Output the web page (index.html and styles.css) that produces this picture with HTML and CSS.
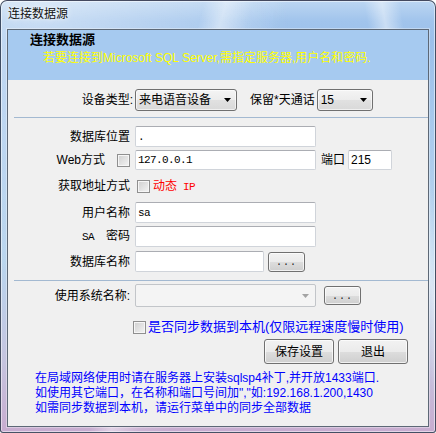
FILE: index.html
```html
<!DOCTYPE html>
<html lang="zh-CN">
<head>
<meta charset="utf-8">
<title>连接数据源</title>
<link rel="stylesheet" href="styles.css">
</head>
<body>
<div class="window">
  <div class="titlebar">连接数据源</div>
  <div class="client">
    <div class="header">
      <div class="header-title">连接数据源</div>
      <div class="header-sub">若要连接到Microsoft SQL Server,需指定服务器,用户名和密码.</div>
    </div>
    <div class="body">
      <div class="row row-device">
        <span class="label label-device">设备类型:</span>
        <div class="combo combo-device"><span>来电语音设备</span><svg class="arrow" width="7" height="4" viewBox="0 0 7 4"><path d="M0 0H7L3.5 4Z"/></svg></div>
        <span class="label-days">保留*天通话</span>
        <div class="combo combo-days"><span>15</span><svg class="arrow" width="7" height="4" viewBox="0 0 7 4"><path d="M0 0H7L3.5 4Z"/></svg></div>
      </div>
      <div class="sep sep1"></div>
      <div class="row row-dbloc">
        <span class="label">数据库位置</span>
        <div class="input input-wide"><span class="mono">.</span></div>
      </div>
      <div class="row row-web">
        <span class="label label-web">Web方式<span class="checkbox"></span></span>
        <div class="input input-wide"><span class="mono">127.0.0.1</span></div>
        <span class="port-label">端口</span>
        <div class="input input-port">215</div>
      </div>
      <div class="row row-addr">
        <span class="label">获取地址方式</span>
        <span class="checkbox cb-addr"></span>
        <span class="red">动态<span class="mono"> IP</span></span>
      </div>
      <div class="row row-user">
        <span class="label">用户名称</span>
        <div class="input input-wide"><span class="mono">sa</span></div>
      </div>
      <div class="row row-sa">
        <span class="label"><span class="mono">SA  </span>密码</span>
        <div class="input input-wide"></div>
      </div>
      <div class="row row-dbname">
        <span class="label">数据库名称</span>
        <div class="input input-dbname"></div>
        <div class="btn btn-dots">...</div>
      </div>
      <div class="sep sep2"></div>
      <div class="row row-sys">
        <span class="label">使用系统名称:</span>
        <div class="combo-disabled"><svg class="arrow" width="7" height="4" viewBox="0 0 7 4"><path d="M0 0H7L3.5 4Z"/></svg></div>
        <div class="btn btn-dots btn-dots2">...</div>
      </div>
      <div class="row row-sync">
        <span class="checkbox"></span>
        <span class="sync-text">是否同步数据到本机(仅限远程速度慢时使用)</span>
      </div>
      <div class="row row-buttons">
        <div class="btn btn-main">保存设置</div>
        <div class="btn btn-main">退出</div>
      </div>
      <div class="notes">
        <div>在局域网络使用时请在服务器上安装sqlsp4补丁,并开放1433端口.</div>
        <div>如使用其它端口，在名称和端口号间加","如:192.168.1.200,1430</div>
        <div>如需同步数据到本机，请运行菜单中的同步全部数据</div>
      </div>
    </div>
  </div>
</div>
</body>
</html>
```
FILE: styles.css
```css
* { box-sizing: border-box; }
html, body { margin: 0; padding: 0; }
body {
  width: 436px;
  height: 433px;
  overflow: hidden;
  font: 12px/14px "Liberation Sans", "Noto Sans CJK SC", sans-serif;
  color: #000;
  background: #fff;
}

.window {
  width: 436px;
  height: 433px;
  display: flex;
  flex-direction: column;
  padding: 0 6px 5px;
  border: 1px solid rgba(45, 55, 75, 0.85);
  border-radius: 7px 7px 3px 3px;
  background:
    radial-gradient(ellipse at 8% 0%, rgba(255,255,255,0.45), rgba(255,255,255,0) 45%),
    linear-gradient(105deg, rgba(255,255,255,0) 37%, rgba(255,255,255,0.45) 41%, rgba(255,255,255,0.1) 46%, rgba(255,255,255,0) 52%),
    linear-gradient(80deg, rgba(255,255,255,0) 86%, rgba(255,255,255,0.45) 89.5%, rgba(255,255,255,0) 93%),
    linear-gradient(180deg, #bcd6f2 0px, #a1c4ec 20px, #9cc0ea 40px, #abcbed 140px, #b9d5ee 260px, #c5c4df 360px, #c8abcf 433px);
  box-shadow: inset 0 0 0 1px rgba(255, 255, 255, 0.5);
}

.titlebar {
  height: 28px;
  flex: none;
  padding: 6px 0 0 1px;
  line-height: 14px;
  color: #111;
  text-shadow: 0 0 6px rgba(255,255,255,0.9), 0 0 3px rgba(255,255,255,0.8);
}

.client {
  flex: 1;
  display: flex;
  flex-direction: column;
  border: 1px solid #5d6876;
  background: #f0f0f0;
  box-shadow: 0 0 0 1px rgba(255, 255, 255, 0.35);
}

.header {
  height: 50px;
  flex: none;
  background: #a6caf0;
  padding: 2px 0 0 22px;
}
.header-title {
  font-size: 13px;
  font-weight: bold;
  line-height: 16px;
}
.header-sub {
  color: #ffff00;
  margin: 3px 0 0 13px;
  line-height: 14px;
}

.body { flex: 1; }

.row { display: flex; align-items: center; }
.label {
  width: 122px;
  flex: none;
  text-align: right;
  margin-right: 5px;
  white-space: pre;
}
.mono {
  font-family: "Liberation Mono", monospace;
  font-size: 11px;
  letter-spacing: -0.6px;
  white-space: pre;
}
.red { color: #ff0000; }

.combo {
  display: flex;
  align-items: center;
  justify-content: space-between;
  height: 22px;
  border: 1px solid #707070;
  border-radius: 3px;
  padding: 0 5px 0 3px;
  background: linear-gradient(#f4f4f4 0%, #ececec 50%, #e1e1e1 51%, #d9d9d9 100%);
  box-shadow: inset 0 0 0 1px rgba(255, 255, 255, 0.6);
}
.arrow { display: block; fill: #000; }

.row-device { margin-top: 9px; height: 22px; }
.label-device { width: 125px; margin-right: 2px; }
.combo-device { width: 102px; }
.label-days { margin-left: 13px; margin-right: 2px; }
.combo-days { width: 56px; }

.sep { height: 1px; background: #a3b9d1; margin-left: 6px; }
.sep1 { margin-top: 6px; }
.sep2 { margin-top: 8px; }

.input {
  height: 21px;
  background: #fff;
  border: 1px solid #d0d4da;
  border-top-color: #abadb3;
  border-radius: 2px;
  padding: 0 2px;
  display: flex;
  align-items: center;
}
.input-wide { width: 181px; }
.input-port { width: 44px; height: 20px; }
.input-dbname { width: 129px; }

.row-dbloc { margin-top: 8px; height: 21px; }
.row-web { margin-top: 3px; height: 20px; }
.row-web .input-wide { height: 20px; }
.label-web { display: flex; justify-content: flex-end; align-items: center; gap: 12px; }
.port-label { margin-left: 5px; margin-right: 3px; }

.checkbox {
  display: block;
  width: 13px;
  height: 13px;
  flex: none;
  border: 1px solid #8f8f8f;
  background: linear-gradient(135deg, #cfcfcf 0%, #f4f4f4 100%);
  box-shadow: inset 0 0 0 1px #f6f6f6;
}

.row-addr { margin-top: 6px; height: 20px; }
.cb-addr { margin-left: 2px; margin-right: 3px; }

.row-user { margin-top: 6px; height: 21px; }
.row-sa { margin-top: 3px; height: 21px; }
.row-dbname { margin-top: 4px; height: 21px; }

.btn {
  display: flex;
  align-items: center;
  justify-content: center;
  border: 1px solid #707070;
  border-radius: 3px;
  background: linear-gradient(#f2f2f2 0%, #ebebeb 50%, #dddddd 51%, #cfcfcf 100%);
  box-shadow: inset 0 0 0 1px rgba(255, 255, 255, 0.7);
}
.btn-dots {
  width: 37px;
  height: 20px;
  margin-left: 4px;
  padding-top: 3px;
  font-family: "Liberation Mono", monospace;
  font-size: 10px;
  letter-spacing: 1px;
  color: #222;
}
.btn-dots2 { margin-left: 8px; height: 19px; }

.row-sys { margin-top: 3px; height: 23px; }
.combo-disabled {
  width: 181px;
  height: 23px;
  border: 1px solid #c2c5c9;
  border-radius: 2px;
  background: #f4f4f4;
  display: flex;
  justify-content: flex-end;
  align-items: center;
  padding-right: 6px;
}
.combo-disabled .arrow { fill: #a3a3a3; }

.row-sync { margin-top: 12px; height: 16px; padding-left: 125px; }
.sync-text { margin-left: 2px; font-size: 13px; line-height: 16px; color: #0000ff; }

.row-buttons { margin-top: 4px; padding-left: 256px; gap: 4px; }
.btn-main { width: 70px; height: 25px; }

.notes {
  margin-top: 7px;
  padding-left: 27px;
  color: #0000ff;
  line-height: 15px;
}
```
